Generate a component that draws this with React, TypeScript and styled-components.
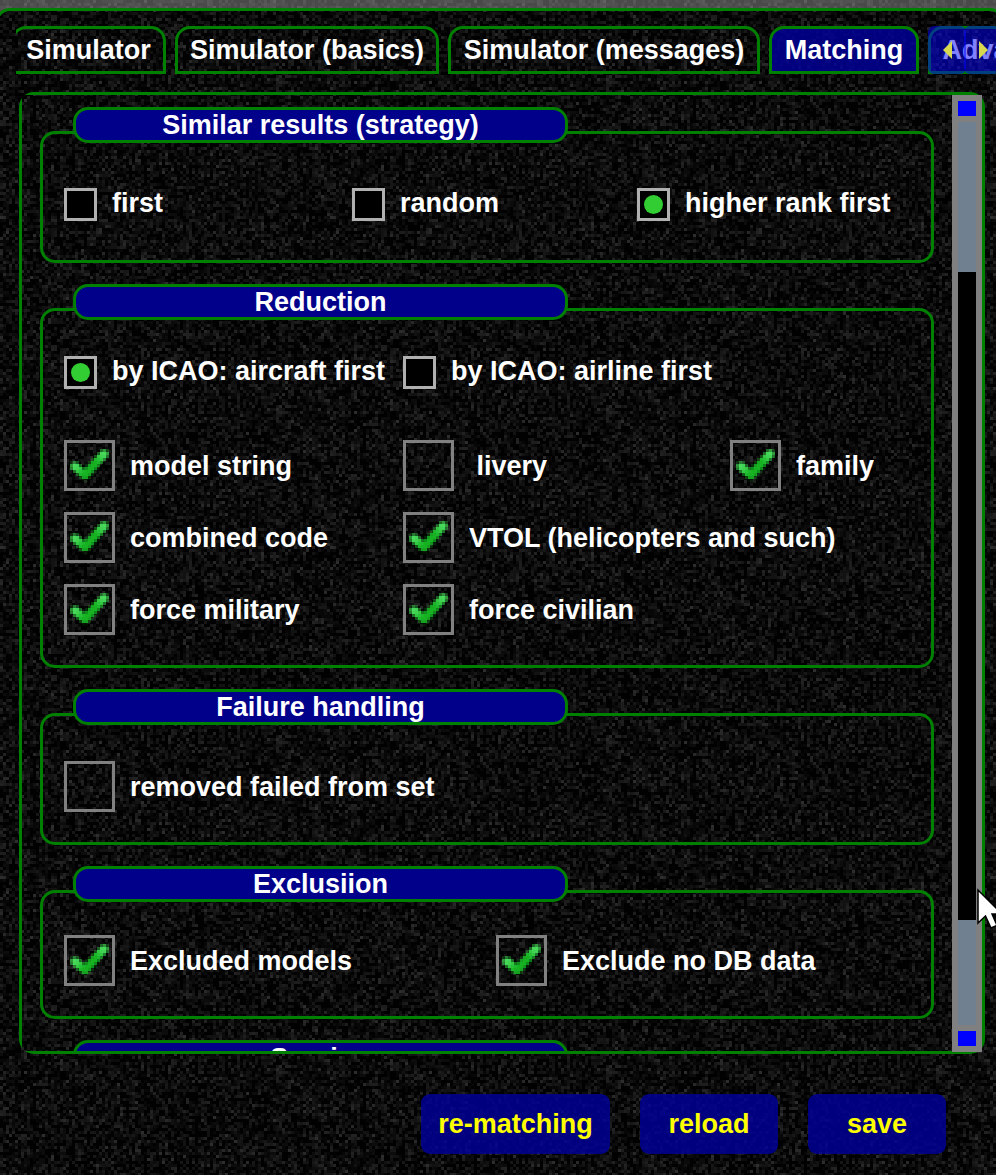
import React from 'react';
import styled, { createGlobalStyle } from 'styled-components';

/* Grainy texture: a tile of 3px cells in a few grey levels. */
function grain(base: number, spread: number, seed: number): string {
  const cells = 110;
  const levels = 9;
  let s = seed;
  const next = () => {
    s = (s + 0x6d2b79f5) | 0;
    let t = Math.imul(s ^ (s >>> 15), 1 | s);
    t = (t + Math.imul(t ^ (t >>> 7), 61 | t)) ^ t;
    return ((t ^ (t >>> 14)) >>> 0) / 4294967296;
  };
  const paths: string[] = Array.from({ length: levels }, () => '');
  for (let y = 0; y < cells; y++) {
    for (let x = 0; x < cells; x++) {
      const v = (next() + next() + next()) / 3;
      const k = Math.min(levels - 1, Math.max(0, Math.floor((v - 0.37) * 1.75 * levels)));
      if (k > 0) paths[k] += `M${x} ${y}h1v1h-1z`;
    }
  }
  const grey = (k: number) => {
    const g = Math.round(base + (spread * k) / (levels - 1));
    return `rgb(${g},${g},${g})`;
  };
  const body = paths
    .map((d, k) => (d ? `<path fill="${grey(k)}" d="${d}"/>` : ''))
    .join('');
  const size = cells * 3;
  const svg = `<svg xmlns="http://www.w3.org/2000/svg" width="${size}" height="${size}" viewBox="0 0 ${cells} ${cells}" shape-rendering="crispEdges"><rect width="${cells}" height="${cells}" fill="${grey(0)}"/>${body}</svg>`;
  return `url("data:image/svg+xml,${encodeURIComponent(svg)}")`;
}

const darkGrain = grain(1, 44, 7);
const lightGrain = grain(74, 24, 21);

const GlobalStyle = createGlobalStyle`
  * { box-sizing: border-box; }
  body {
    margin: 0;
    overflow: hidden;
    background: #505050 ${lightGrain};
    font: bold 27px/31px "Liberation Sans", Arial, sans-serif;
    color: #fff;
  }
`;

const Page = styled.div`
  width: 996px;
  height: 1175px;
  padding-top: 8px;
  overflow: hidden;
`;

const Window = styled.main`
  width: 1010px;
  height: 1190px;
  margin-left: -5px;
  padding-left: 21px;
  border: 3px solid #008000;
  border-left-width: 3px;
  border-radius: 15px;
  background: #0b0b0b ${darkGrain} fixed;
`;

const TabBar = styled.nav`
  position: relative;
  display: flex;
  gap: 9px;
  width: 983px;
  height: 48px;
  margin: 15px 0 0 -3px;
  overflow: hidden;
`;

const Tab = styled.div<{ $width: number; $active?: boolean; $first?: boolean }>`
  flex: none;
  width: ${p => p.$width}px;
  height: 48px;
  margin-left: ${p => (p.$first ? '-5px' : '0')};
  border: 3px solid #008000;
  border-radius: 15px 15px 0 0;
  background: ${p => (p.$active ? 'rgba(0, 0, 158, 0.8)' : 'transparent')};
  line-height: 42px;
  text-align: center;
  white-space: nowrap;
`;

const TabScroller = styled.div`
  position: absolute;
  top: 0;
  left: 912px;
  display: flex;
`;

const ScrollButton = styled.div`
  display: flex;
  align-items: center;
  width: 38px;
  height: 48px;
  padding-left: 15px;
  border-radius: 6px;
  background: rgba(0, 0, 255, 0.5);

  & + & {
    margin-left: -2px;
  }
`;

const Panel = styled.section`
  width: 966px;
  height: 962px;
  margin: 18px 0 0;
  border: 3px solid #008000;
  border-radius: 15px;
`;

const Viewport = styled.div`
  display: flex;
  justify-content: space-between;
  height: 956px;
  background: #0b0b0b ${darkGrain} fixed;
`;

const Groups = styled.div`
  display: flex;
  flex-direction: column;
  gap: 21px;
  height: 956px;
  padding: 12px 0 0 18px;
  overflow: hidden;
`;

const GroupRoot = styled.section`
  flex: none;
  width: 894px;
`;

const GroupTitle = styled.h2`
  position: relative;
  width: 495px;
  height: 36px;
  margin: 0 0 -12px 33px;
  border: 3px solid #008000;
  border-radius: 15px;
  background: #00008b;
  font-size: 27px;
  line-height: 30px;
  text-align: center;
`;

const GroupBody = styled.div<{ $height: number; $pad: number }>`
  height: ${p => p.$height}px;
  padding: ${p => p.$pad}px 0 0 21px;
  border: 3px solid #008000;
  border-radius: 15px;
`;

const Row = styled.div<{ $columns: string; $below?: number }>`
  display: grid;
  grid-template-columns: ${p => p.$columns};
  margin-bottom: ${p => p.$below ?? 0}px;
`;

const Option = styled.label`
  display: flex;
  align-items: center;
  gap: 15px;
  white-space: pre;
`;

const RadioBox = styled.span`
  display: flex;
  flex: none;
  align-items: center;
  justify-content: center;
  width: 33px;
  height: 33px;
  border: 3px solid #b0b0b0;
  background: #000;
`;

const RadioDot = styled.span`
  width: 19px;
  height: 19px;
  border-radius: 50%;
  background: #32cd32;
`;

const RadioLabel = styled.span`
  padding-bottom: 2px;
`;

const CheckLabel = styled.span`
  padding-top: 2px;
`;

const CheckBox = styled.span`
  flex: none;
  width: 51px;
  height: 51px;
  border: 3px solid #808080;
`;

const Track = styled.div`
  display: flex;
  flex-direction: column;
  align-items: center;
  width: 30px;
  height: 957px;
  padding: 6px 0;
  background: #808080;
`;

const ArrowBlock = styled.div`
  width: 18px;
  height: 15px;
  background: #0000ff;
`;

const Gutter = styled.div`
  width: 18px;
  height: 903px;
  margin: 6px 0;
  padding-top: 150px;
  background: #708090;
`;

const Thumb = styled.div`
  height: 648px;
  background: #000;
`;

const Actions = styled.footer`
  display: flex;
  justify-content: flex-end;
  gap: 30px;
  width: 927px;
  margin-top: 40px;
`;

const ActionButton = styled.button<{ $width: number }>`
  width: ${p => p.$width}px;
  height: 60px;
  padding: 0;
  border: 0;
  border-radius: 9px;
  background: rgba(0, 0, 158, 0.8);
  color: #ffff00;
  font: inherit;
`;

const Pointer = styled.svg`
  position: absolute;
  left: 977px;
  top: 888px;
`;

/* The tick is a small bitmap-like glyph: 3px cells shaded by distance to its two strokes. */
const tickPoints: [number, number][] = [[8, 23.5], [18, 32], [37, 11]];

function segmentDistance(px: number, py: number, a: [number, number], b: [number, number]) {
  const dx = b[0] - a[0];
  const dy = b[1] - a[1];
  const t = Math.max(0, Math.min(1, ((px - a[0]) * dx + (py - a[1]) * dy) / (dx * dx + dy * dy)));
  return Math.hypot(px - a[0] - t * dx, py - a[1] - t * dy);
}

const tickCells = Array.from({ length: 225 }, (_, i) => {
  const x = (i % 15) * 3;
  const y = Math.floor(i / 15) * 3;
  const d = Math.min(
    segmentDistance(x + 1.5, y + 1.5, tickPoints[0], tickPoints[1]),
    segmentDistance(x + 1.5, y + 1.5, tickPoints[1], tickPoints[2]),
  );
  const alpha = Math.max(0, Math.min(1, 1 - (d - 2.6) / 3.4));
  const ends = Math.min(Math.hypot(x - 6.5, y - 22), Math.hypot(x - 35, y - 9.5));
  const glow = Math.max(0, 1 - ends / 11);
  const fill = `rgb(${Math.round(20 + 60 * glow)},${Math.round(178 + 44 * glow)},${Math.round(34 + 66 * glow)})`;
  return { x, y, alpha, fill };
}).filter(c => c.alpha > 0.02);

function CheckMark() {
  return (
    <svg width="45" height="45" viewBox="0 0 45 45" display="block">
      <defs>
        <filter id="soft" x="-20%" y="-20%" width="140%" height="140%">
          <feGaussianBlur stdDeviation="0.7" />
        </filter>
      </defs>
      <g filter="url(#soft)" shapeRendering="crispEdges">
        {tickCells.map(c => (
          <rect key={`${c.x}-${c.y}`} x={c.x} y={c.y} width="3" height="3" fill={c.fill} fillOpacity={c.alpha} />
        ))}
      </g>
    </svg>
  );
}

function Radio({ label, on }: { label: string; on?: boolean }) {
  return (
    <Option>
      <RadioBox>{on && <RadioDot />}</RadioBox>
      <RadioLabel>{label}</RadioLabel>
    </Option>
  );
}

function Check({ label, on }: { label: string; on?: boolean }) {
  return (
    <Option>
      <CheckBox>{on && <CheckMark />}</CheckBox>
      <CheckLabel>{label}</CheckLabel>
    </Option>
  );
}

interface GroupProps {
  title: string;
  height: number;
  pad: number;
  children?: React.ReactNode;
}

function Group({ title, height, pad, children }: GroupProps) {
  return (
    <GroupRoot>
      <GroupTitle>{title}</GroupTitle>
      <GroupBody $height={height} $pad={pad}>{children}</GroupBody>
    </GroupRoot>
  );
}

const wide = '339px 327px auto';

export default function App() {
  return (
    <Page>
      <GlobalStyle />
      <Window>
        <TabBar>
          <Tab $width={155} $first>Simulator</Tab>
          <Tab $width={264}>Simulator (basics)</Tab>
          <Tab $width={312}>Simulator (messages)</Tab>
          <Tab $width={150} $active>Matching</Tab>
          <Tab $width={158}>Advanced</Tab>
          <TabScroller>
            <ScrollButton>
              <svg width="9" height="18"><path d="M9 0V18L0 9Z" fill="#d8d850" /></svg>
            </ScrollButton>
            <ScrollButton>
              <svg width="9" height="18"><path d="M0 0V18L9 9Z" fill="#d8d850" /></svg>
            </ScrollButton>
          </TabScroller>
        </TabBar>
        <Panel>
          <Viewport>
            <Groups>
              <Group title="Similar results (strategy)" height={132} pad={54}>
                <Row $columns="288px 285px auto">
                  <Radio label="first" />
                  <Radio label="random" />
                  <Radio label="higher rank first" on />
                </Row>
              </Group>
              <Group title="Reduction" height={360} pad={45}>
                <Row $columns={wide} $below={51}>
                  <Radio label="by ICAO: aircraft first" on />
                  <Radio label="by ICAO: airline first" />
                </Row>
                <Row $columns={wide} $below={21}>
                  <Check label="model string" on />
                  <Check label=" livery" />
                  <Check label="family" on />
                </Row>
                <Row $columns={wide} $below={21}>
                  <Check label="combined code" on />
                  <Check label="VTOL (helicopters and such)" on />
                </Row>
                <Row $columns={wide}>
                  <Check label="force military" on />
                  <Check label="force civilian" on />
                </Row>
              </Group>
              <Group title="Failure handling" height={132} pad={45}>
                <Check label="removed failed from set" />
              </Group>
              <Group title="Exclusiion" height={129} pad={42}>
                <Row $columns="432px auto">
                  <Check label="Excluded models" on />
                  <Check label="Exclude no DB data" on />
                </Row>
              </Group>
              <Group title="Scoring" height={132} pad={42} />
            </Groups>
            <Track>
              <ArrowBlock />
              <Gutter><Thumb /></Gutter>
              <ArrowBlock />
            </Track>
          </Viewport>
        </Panel>
        <Actions>
          <ActionButton $width={189}>re-matching</ActionButton>
          <ActionButton $width={138}>reload</ActionButton>
          <ActionButton $width={138}>save</ActionButton>
        </Actions>
      </Window>
      <Pointer width="19" height="44" viewBox="0 0 19 44">
        <path d="M1 2V35L8.5 28L14 40L20 37.5L15 26H25Z" fill="#fff" stroke="#000" strokeWidth="1.5" />
      </Pointer>
    </Page>
  );
}
